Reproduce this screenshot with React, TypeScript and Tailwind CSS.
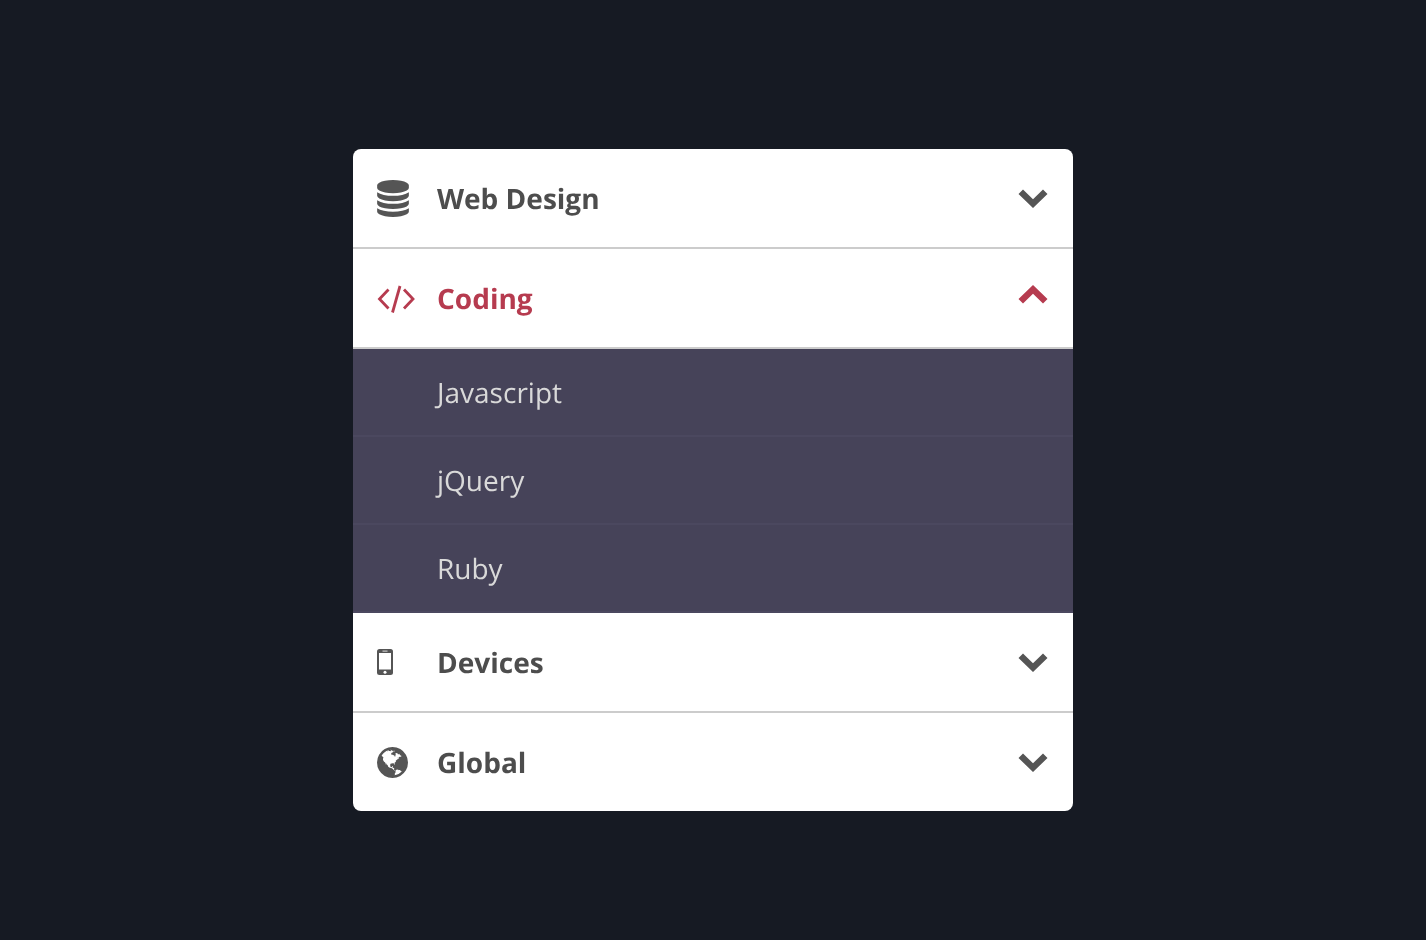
import React from "react";

const Chevron = ({ up, className }: { up?: boolean; className: string }) => (
  <svg width="30" height="20" viewBox="0 0 30 20" className={className}>
    {up ? (
      <path d="M15 1 L29.5 15 L25 19.5 L15 9.7 L5 19.5 L0.5 15 Z" fill="currentColor" />
    ) : (
      <path d="M15 19 L29.5 5 L25 0.5 L15 10.3 L5 0.5 L0.5 5 Z" fill="currentColor" />
    )}
  </svg>
);

const Code = () => (
  <svg width="38" height="28" viewBox="0 0 38 28" fill="none" stroke="currentColor" strokeWidth="2.8" className="mt-[2px]">
    <path d="M11.5 4.5 L2.5 14 L11.5 23.5" />
    <path d="M27 4.5 L36 14 L27 23.5" />
    <path d="M23 1 L15.5 27.5" />
  </svg>
);

const Database = () => (
  <svg width="32" height="37" viewBox="0 0 1536 1792" fill="currentColor">
    <path d="M768 768q237 0 443-43t325-127v170q0 69-103 128t-280 93.5-385 34.5-385-34.5-280-93.5-103-128v-170q119 84 325 127t443 43zm0 768q237 0 443-43t325-127v170q0 69-103 128t-280 93.5-385 34.5-385-34.5-280-93.5-103-128v-170q119 84 325 127t443 43zm0-384q237 0 443-43t325-127v170q0 69-103 128t-280 93.5-385 34.5-385-34.5-280-93.5-103-128v-170q119 84 325 127t443 43zm0-1152q208 0 385 34.5t280 93.5 103 128v128q0 69-103 128t-280 93.5-385 34.5-385-34.5-280-93.5-103-128v-128q0-69 103-128t280-93.5 385-34.5z" />
  </svg>
);

const Globe = () => (
  <svg width="31" height="31" viewBox="0 128 1536 1536" fill="currentColor">
    <path d="M768 128q209 0 385.5 103t279.5 279.5 103 385.5-103 385.5-279.5 279.5-385.5 103-385.5-103-279.5-279.5-103-385.5 103-385.5 279.5-279.5 385.5-103zm274 521q-2 1-9.5 9.5t-13.5 9.5q2 0 4.5-5t5-11 3.5-7q6-7 22-15 14-6 52-12 34-8 51 11-2-2 9.5-13t14.5-12q3-2 15-4.5t15-7.5l2-22q-12 1-17.5-7t-6.5-21q0 2-6 8 0-7-4.5-8t-11.5 1-9 1q-10-3-15-7.5t-8-16.5-4-15q-2-5-9.5-11t-9.5-10q-1-2-2.5-5.5t-3-6.5-4-5.5-5.5-2.5-7 5-7.5 10-4.5 5q-3-2-6-1.5t-4.5 1-4.5 3-5 3.5q-3 2-8.5 3t-8.5 2q15-5-1-11-10-4-16-3 9-4 7.5-12t-8.5-14h5q-1-4-8.5-8.5t-17.5-8.5-13-6q-8-5-34-9.5t-33-.5q-5 6-4.5 10.5t4 14 3.5 12.5q1 6-5.5 13t-6.5 12q0 7 14 15.5t10 21.5q-3 8-16 16t-16 12q-5 8-1.5 18.5t10.5 16.5q2 2 1.5 4t-3.5 4.5-5.5 4-6.5 3.5l-3 2q-11 5-20.5-6t-13.5-26q-7-25-16-30-23-8-29 1-5-13-41-26-25-9-58-4 6-1 0-15-7-15-19-12 3-6 4-17.5t1-13.5q3-13 12-23 1-1 7-8.5t9.5-13.5.5-6q35 4 50-11 5-5 11.5-17t10.5-17q9-6 14-5.5t14.5 5.5 14.5 5q14 1 15.5-11t-7.5-20q12 1 3-17-4-7-8-9-12-4-27 5-8 4 2 8-1-1-9.5 10.5t-16.5 17.5-14-13q-1-1-5.5-13.5t-9.5-13.5q-8 0-16 15 3-8-11-15t-24-8q19-12-8-27-7-4-20.5-5t-19.5 4q-5 7-5.5 11.5t5 8 10.5 5.5 11.5 4 8.5 3q14 10 8 14-2 1-8.5 3.5t-11.5 4.5-6 4q-3 4 0 14t-2 14q-5-5-9-17.5t-7-16.5q7 9-25 6l-10-1q-4 0-16 2t-20.5 1-13.5-8q-4-8 0-20 1-4 4-2-4-3-11-9.5t-10-8.5q-46 15-94 41 6 1 12-1 5-2 13-6.5t10-5.5q34-14 42-7l5-5q14 16 20 25-7-4-30-1-20 6-22 12 7 12 5 18-4-3-11.5-10t-14.5-11-15-5q-16 0-22 1-146 80-235 222 7 7 12 8 4 1 5 9t2.5 11 11.5-3q9 8 3 19 1-1 44 27 19 17 21 21 3 11-10 18-1-2-9-9t-9-4q-3 5 .5 18.5t10.5 12.5q-7 0-9.5 16t-2.5 35.5-1 23.5l2 1q-3 12 5.5 34.5t21.5 19.5q-13 3 20 43 6 8 8 9 3 2 12 7.5t15 10 10 10.5q4 5 10 22.5t14 23.5q-2 6 9.5 20t10.5 23q-1 0-2.5 1t-2.5 1q3 7 15.5 14t15.5 13q1 3 2 10t3 11 8 2q2-20-24-62-15-25-17-29-3-5-5.5-15.5t-4.5-14.5q2 0 6 1.5t8.5 3.5 7.5 4 2 3q-3 7 2 17.5t12 18.5 17 19 12 13q6 6 14 19.5t0 13.5q9 0 20 10.5t17 19.5q5 8 8 26t5 24q2 7 8.5 13.5t12.5 9.5l16 8 13 7q5 2 18.5 10.5t21.5 11.5q10 4 16 4t14.5-2.5 13.5-3.5q15-2 29 15t21 21q36 19 55 11-2 1 .5 7.5t8 15.5 9 14.5 5.5 8.5q5 6 18 15t18 15q6-4 7-9-3 8 7 20t18 10q14-3 14-32-31 15-49-18 0-1-2.5-5.5t-4-8.5-2.5-8.5 0-7.5 5-3q9 0 10-3.5t-2-12.5-4-13q-1-8-11-20t-12-15q-5 9-16 8t-16-9q0 1-1.5 5.5t-1.5 6.5q-13 0-15-1 1-3 2.5-17.5t3.5-22.5q1-4 5.5-12t7.5-14.5 4-12.5-4.5-9.5-17.5-2.5q-19 1-26 20-1 3-3 10.5t-5 11.5-9 7q-7 3-24 2t-24-5q-13-8-22.5-29t-9.5-37q0-10 2.5-26.5t3-25-5.5-24.5q3-2 9-9.5t10-10.5q2-1 4.5-1.5t4.5 0 4-1.5 3-6q-1-1-4-3-3-3-4-3 7 3 28.5-1.5t27.5 1.5q15 11 22-2 0-1-2.5-9.5t-.5-13.5q5 27 29 9 3 3 15.5 5t17.5 5q3 2 7 5.5t5.5 4.5 5-.5 8.5-6.5q10 14 12 24 11 40 19 44 7 3 11 2t4.5-9.5 0-14-1.5-12.5l-1-8v-18l-1-8q-15-3-18.5-12t1.5-18.5 15-18.5q1-1 8-3.5t15.5-6.5 12.5-8q21-19 15-35 7 0 11-9-1 0-5-3t-7.5-5-4.5-2q9-5 2-16 5-3 7.5-11t7.5-10q9 12 21 2 8-8 1-16 5-7 20.5-10.5t18.5-9.5q7 2 8-2t1-12 3-12q4-5 15-9t13-5l17-11q3-4 0-4 18 2 31-11 10-11-6-20 3-6-3-9.5t-15-5.5q3-1 11.5-.5t10.5-1.5q15-10-7-16-17-5-43 12zm-163 877q206-36 351-189-3-3-12.5-4.5t-12.5-3.5q-18-7-24-8 1-7-2.5-13t-8-9-12.5-8-11-7q-2-2-7-6t-7-5.5-7.5-4.5-8.5-2-10 1l-3 1q-3 1-5.5 2.5t-5.5 3-4 3 0 2.5q-21-17-36-22-5-1-11-5.5t-10.5-7-10-1.5-11.5 7q-5 5-6 15t-2 13q-7-5 0-17.5t2-18.5q-3-6-10.5-4.5t-12 4.5-11.5 8.5-9 6.5-8.5 5.5-8.5 7.5q-3 4-6 12t-5 11q-2-4-11.5-6.5t-9.5-5.5q2 10 4 35t5 38q7 31-12 48-27 25-29 40-4 22 12 26 0 7-8 20.5t-7 21.5q0 6 2 16z" />
  </svg>
);

const Phone = () => (
  <svg width="16" height="26" viewBox="0 0 16 26">
    <rect x="0" y="0" width="16" height="26" rx="2.5" fill="#555" />
    <rect x="2" y="4" width="12" height="16.5" fill="#fff" />
    <rect x="5.5" y="1.6" width="5" height="1" fill="#ddd" />
    <circle cx="8" cy="23.2" r="1.5" fill="#fff" />
  </svg>
);

const Row = ({ icon, label, active, last }: { icon: React.ReactNode; label: string; active?: boolean; last?: boolean }) => (
  <div className={`flex items-center pl-6 pr-[25px] ${last ? "h-[98px]" : "h-[100px] border-b-2 border-[#ccc]"}`}>
    <div className={`w-[60px] flex items-center ${active ? "text-[#b63b4f]" : "text-[#555]"}`}>{icon}</div>
    <span className={`flex-1 pt-[2px] text-[28px] font-bold leading-none ${active ? "text-[#b63b4f]" : "text-[#4d4d4d]"}`}>{label}</span>
    <Chevron up={active} className={active ? "text-[#b63b4f] -mt-[9px]" : "text-[#555] mt-[2px]"} />
  </div>
);

const Sub = ({ label }: { label: string }) => (
  <div className="h-[88px] flex items-center pl-[84px] pt-[1px] text-[28px] leading-none text-[#d9d9d9] border-b-2 border-[#4b485f]">
    {label}
  </div>
);

export default function App() {
  return (
    <div className="min-h-[940px] bg-[#161a23] flex justify-center pt-[149px] font-['Open_Sans',sans-serif] [text-rendering:geometricPrecision]">
      <div className="w-[720px] h-[662px] bg-white rounded-lg overflow-hidden will-change-transform">
        <Row icon={<Database />} label="Web Design" />
        <Row icon={<Code />} label="Coding" active />
        <div className="bg-[#464359]">
          <Sub label="Javascript" />
          <Sub label="jQuery" />
          <Sub label="Ruby" />
        </div>
        <Row icon={<Phone />} label="Devices" />
        <Row icon={<Globe />} label="Global" last />
      </div>
    </div>
  );
}
